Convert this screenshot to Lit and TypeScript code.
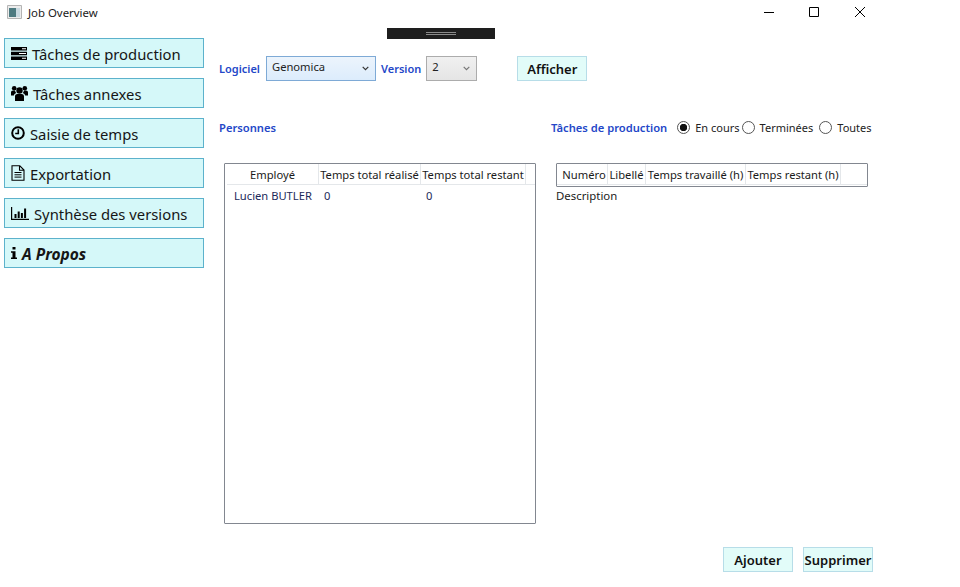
import { LitElement, html, css, svg } from "lit";
import { customElement } from "lit/decorators.js";

const icons = {
  server: svg`<svg class="icon" width="16" height="13" viewBox="0 0 16 13"><path fill="#000" d="M0 0h16v3.400H0zM0 4.800h16v3.400H0zM0 9.600h16V13H0z"/><path fill="#fff" d="M11 1.200h4v1h-4zM8 6h7v1H8zM11 10.800h4v1h-4z"/></svg>`,
  users: svg`<svg class="icon" width="17" height="16" viewBox="0 0 17 16"><circle cx="8.500" cy="5.500" r="3.200"/><circle cx="3.200" cy="3.200" r="2.300"/><circle cx="13.800" cy="3.200" r="2.300"/><path d="M4 16v-4.500C4 9.700 5.300 9 6.300 9h4.400c1 0 2.300.7 2.300 2.500V16zM0 10.500V7.500c0-1.200.8-2 2-2h2c.2 1 .7 1.900 1.300 2.500C3.800 8.400 3 9.500 2.900 10.500zM17 10.500V7.500c0-1.200-.8-2-2-2h-2c-.2 1-.7 1.900-1.300 2.500 1.500.4 2.300 1.500 2.400 2.500z"/></svg>`,
  clock: svg`<svg class="icon" width="14" height="14" viewBox="0 0 14 14"><circle cx="7" cy="7" r="5.800" fill="none" stroke="#000" stroke-width="2"/><path fill="none" stroke="#000" stroke-width="1.600" d="M7.300 3.200v4.300H4.200"/></svg>`,
  file: svg`<svg class="icon" width="14" height="16" viewBox="0 0 14 16"><path fill="none" stroke="#000" stroke-width="1.100" d="M1 .8h7.800L13 5v10.200H1zM8.500 1v4.300H13"/><path stroke="#000" d="M3.500 7.500h7M3.500 9.800h7M3.500 12.100h7"/></svg>`,
  chart: svg`<svg class="icon" width="18" height="13" viewBox="0 0 18 13"><path d="M0 0h1.200v11.800H18V13H0zM3.500 7h2v4h-2zM6.700 4.500h2V11h-2zM9.900 6h2v5h-2zM13.100 1.500h2V11h-2z"/></svg>`,
  info: svg`<svg class="icon" width="6" height="12" viewBox="0 0 6 12"><path d="M1.500 0h3v2.600h-3zM0 4.200h4.500v6.200H6V12H0v-1.600h1.500V5.800H0z"/></svg>`,
};

const navItems = [
  { label: "Tâches de production", icon: icons.server, gap: 5 },
  { label: "Tâches annexes", icon: icons.users, gap: 5 },
  { label: "Saisie de temps", icon: icons.clock, gap: 5 },
  { label: "Exportation", icon: icons.file, gap: 5 },
  { label: "Synthèse des versions", icon: icons.chart, gap: 5 },
];

@customElement("app-root")
export class AppRoot extends LitElement {
  static override styles = css`
    :host {
      display: block;
      width: 960px;
      height: 587px;
      overflow: hidden;
      background: #fff;
      font-family: "Noto Sans", "Open Sans", sans-serif;
      color: #111;
    }

    .titlebar {
      display: flex;
      align-items: center;
      box-sizing: border-box;
      height: 26px;
      padding: 0 0 2px 7px;
      font-size: 11.400px;
      color: #1a1a1a;
    }

    .app-icon {
      margin-right: 6px;
    }

    .win-controls {
      display: flex;
      gap: 30px;
      margin-left: auto;
      margin-right: 92px;
    }

    .win-controls svg:first-child {
      margin-right: -1px;
    }

    .body {
      display: flex;
    }

    .sidebar {
      display: flex;
      flex-direction: column;
      gap: 10px;
      width: 200px;
      margin: 12px 0 0 4px;
    }

    .nav {
      display: flex;
      align-items: center;
      box-sizing: border-box;
      height: 30px;
      padding-left: 6px;
      border: 1px solid #5cb2cc;
      background: #d5f8f9;
      font-size: 14.800px;
      color: #161616;
    }

    .nav span {
      padding-top: 2px;
    }

    .nav.about {
      font-weight: 700;
      font-style: italic;
      font-size: 15.500px;
    }

    .icon {
      flex: none;
    }

    .main {
      flex: 1;
      padding-left: 15px;
    }

    .gripper {
      display: flex;
      align-items: center;
      justify-content: center;
      width: 108px;
      height: 11px;
      margin: 2px 0 0 168px;
      background: #1e1e1e;
    }

    .gripper span {
      width: 30px;
      height: 3px;
      border-top: 1px solid #8a8a8a;
      border-bottom: 1px solid #8a8a8a;
      box-sizing: border-box;
    }

    .toolbar {
      display: flex;
      align-items: center;
      height: 25px;
      margin-top: 17px;
    }

    .label {
      font-size: 11.200px;
      font-weight: 600;
      color: #2447c8;
      white-space: nowrap;
    }

    .toolbar .label {
      font-size: 11px;
    }

    .combo {
      display: flex;
      align-items: flex-start;
      box-sizing: border-box;
      height: 25px;
      padding: 2px 6px 0 5px;
      font-size: 11.200px;
      color: #222;
    }

    .combo svg {
      margin: 7px 0 0 auto;
    }

    .combo.soft {
      width: 110px;
      margin: 0 5px 0 6px;
      border: 1px solid #7eaad6;
      background: linear-gradient(#ecf4fc, #dcecfc);
    }

    .combo.plain {
      width: 51px;
      margin: 0 40px 0 5px;
      border: 1px solid #acacac;
      background: linear-gradient(#f0f0f0, #e5e5e5);
    }

    .btn {
      display: flex;
      align-items: center;
      justify-content: center;
      box-sizing: border-box;
      width: 70px;
      height: 25px;
      padding-top: 1px;
      border: 1px solid #b7dde8;
      background: #e2fcf9;
      font-size: 13px;
      font-weight: 600;
      color: #111;
    }

    .sections {
      display: flex;
      align-items: center;
      height: 18px;
      margin-top: 37px;
    }

    .spacer {
      display: flex;
      align-items: center;
      width: 332px;
      flex: none;
    }

    .radios {
      display: flex;
      align-items: center;
      margin: 1px 0 0 10px;
      font-size: 11px;
      color: #222;
    }

    .radio {
      display: flex;
      align-items: center;
      gap: 5px;
      white-space: nowrap;
    }

    .radio + .radio {
      margin-left: 2px;
    }

    .radio:last-child {
      margin-left: 6px;
    }

    .dot {
      box-sizing: border-box;
      width: 13px;
      height: 13px;
      border: 1px solid #555;
      border-radius: 50%;
      background: #fff;
    }

    .dot.on {
      background: radial-gradient(circle, #111 0 3.400px, #fff 4px);
    }

    .panels {
      display: flex;
      align-items: flex-start;
      gap: 20px;
      margin: 27px 0 0 5px;
    }

    .grid {
      box-sizing: border-box;
      width: 312px;
      border: 1px solid #828790;
      border-radius: 1px;
      font-size: 11.200px;
      color: #1a1a1a;
    }

    .grid.people {
      height: 361px;
    }

    .grid.tasks {
      height: 24px;
    }

    .head {
      display: flex;
      height: 20px;
      border-bottom: 1px solid #e4e7ea;
    }

    .head div {
      box-sizing: border-box;
      border-right: 1px solid #e4e7ea;
      line-height: 21px;
      text-align: center;
      white-space: nowrap;
      overflow: hidden;
    }

    .tasks .head div:first-child {
      padding-left: 4px;
    }

    .people .head {
      margin-left: 2px;
    }

    .row {
      display: flex;
      padding-top: 3px;
      color: #1c2a5a;
      line-height: 16px;
    }

    .row span:nth-child(1) {
      width: 90px;
      padding-left: 9px;
      white-space: nowrap;
    }

    .row span:nth-child(2) {
      width: 102px;
    }

    .desc {
      margin-top: 1px;
      font-size: 11.400px;
      color: #222;
    }

    .actions {
      display: flex;
      justify-content: flex-end;
      gap: 10px;
      width: 654px;
      margin-top: 23px;
    }
  `;

  private _arrow(stroke: string) {
    return html`<svg width="7" height="5" viewBox="0 0 7 5">
      <path fill="none" stroke="${stroke}" stroke-width="1.200" d="M.7 .8l2.800 2.800 2.800-2.800" />
    </svg>`;
  }

  private _head(cols: [string, number][]) {
    return html`<div class="head">
      ${cols.map(([label, w]) => html`<div style="width:${w}px">${label}</div>`)}
    </div>`;
  }

  override render() {
    return html`
      <div class="titlebar">
        <svg class="app-icon" width="15" height="14" viewBox="0 0 15 14">
          <path fill="#ececec" stroke="#b4b4b4" d="M.5 .5h14v13H.5z" />
          <path fill="#4d7a80" d="M2 3h7v9H2z" />
          <path fill="#c9d9e0" d="M9 3h4v9H9z" />
        </svg>
        Job Overview
        <div class="win-controls">
          <svg width="16" height="16" viewBox="0 0 16 16"><path stroke="#000" d="M3 8.500h10" /></svg>
          <svg width="16" height="16" viewBox="0 0 16 16"><path fill="none" stroke="#000" d="M3.500 3.500h9v9h-9z" /></svg>
          <svg width="16" height="16" viewBox="0 0 16 16"><path fill="none" stroke="#000" d="M3 3l10 10M13 3L3 13" /></svg>
        </div>
      </div>
      <div class="body">
        <nav class="sidebar">
          ${navItems.map(
            (n) => html`<div class="nav">
              ${n.icon}<span style="margin-left:${n.gap}px">${n.label}</span>
            </div>`,
          )}
          <div class="nav about">${icons.info}<span style="margin-left:5px">A Propos</span></div>
        </nav>
        <main class="main">
          <div class="gripper"><span></span></div>
          <div class="toolbar">
            <span class="label">Logiciel</span>
            <div class="combo soft">Genomica${this._arrow("#333")}</div>
            <span class="label">Version</span>
            <div class="combo plain">2${this._arrow("#777")}</div>
            <div class="btn">Afficher</div>
          </div>
          <div class="sections">
            <div class="spacer"><span class="label">Personnes</span></div>
            <span class="label">Tâches de production</span>
            <div class="radios">
              <label class="radio"><span class="dot on"></span>En cours</label>
              <label class="radio"><span class="dot"></span>Terminées</label>
              <label class="radio"><span class="dot"></span>Toutes</label>
            </div>
          </div>
          <div class="panels">
            <div class="grid people">
              ${this._head([
                ["Employé", 92],
                ["Temps total réalisé", 102],
                ["Temps total restant", 105],
              ])}
              <div class="row"><span>Lucien BUTLER</span><span>0</span><span>0</span></div>
            </div>
            <div>
              <div class="grid tasks">
                ${this._head([
                  ["Numéro", 51],
                  ["Libellé", 38],
                  ["Temps travaillé (h)", 100],
                  ["Temps restant (h)", 95],
                ])}
              </div>
              <div class="desc">Description</div>
            </div>
          </div>
          <div class="actions">
            <div class="btn">Ajouter</div>
            <div class="btn">Supprimer</div>
          </div>
        </main>
      </div>
    `;
  }
}

declare global {
  interface HTMLElementTagNameMap {
    "app-root": AppRoot;
  }
}
